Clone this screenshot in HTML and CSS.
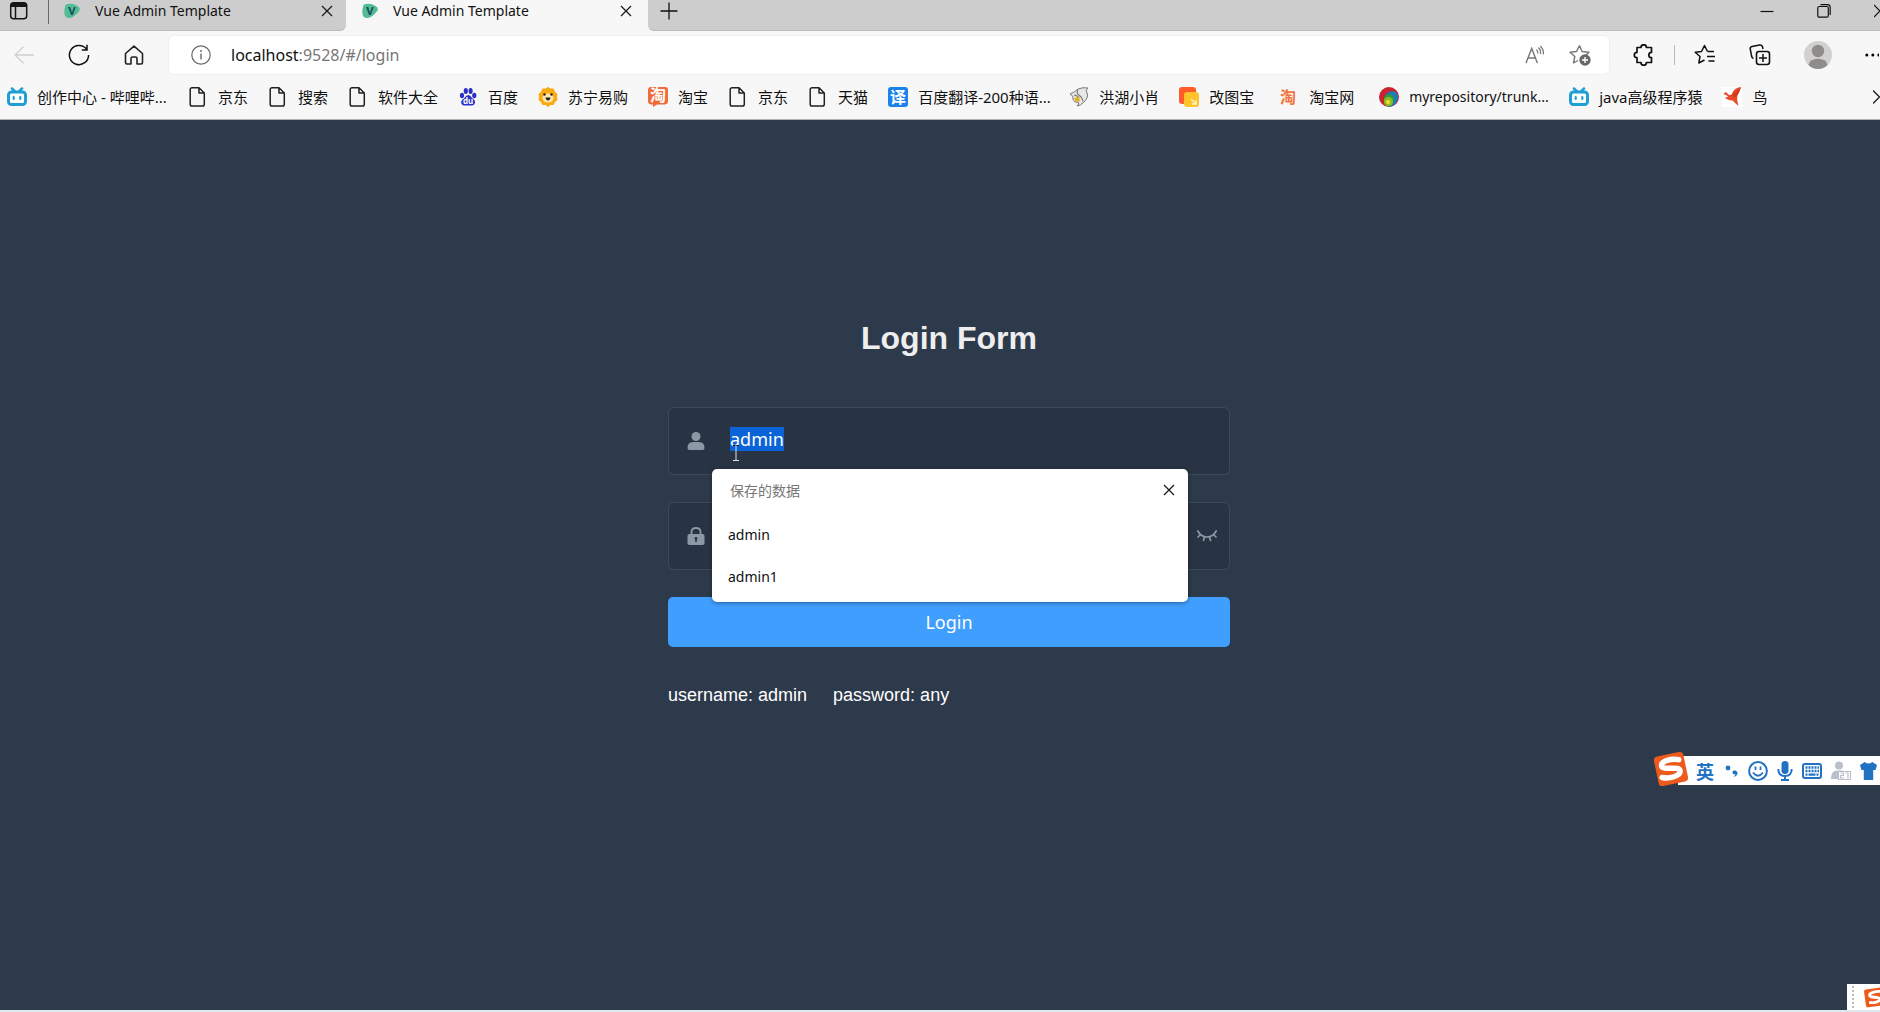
FILE: index.html
```html
<!DOCTYPE html>
<html lang="zh-CN">
<head>
<meta charset="utf-8">
<title>Vue Admin Template</title>
<link rel="stylesheet" href="styles.css">
</head>
<body>
<svg class="sprite" aria-hidden="true">
  <symbol id="file" viewBox="0 0 20 20"><path d="M4 .8H11L16.300 6V17.200A1.800 1.800 0 0 1 14.500 19H4A1.800 1.800 0 0 1 2.200 17.200V2.600A1.800 1.800 0 0 1 4 .8ZM11 .8V6H16.300" fill="none" stroke="#222" stroke-width="1.500" stroke-linejoin="round"/></symbol>
  <symbol id="bili" viewBox="0 0 20 20"><rect x="1.500" y="5" width="17" height="12.500" rx="3" fill="#fff" stroke="#1f9fd4" stroke-width="3"/><path d="M5 1.500L8 4.500M15 1.500L12 4.500" stroke="#1f9fd4" stroke-width="2.500" stroke-linecap="round"/><path d="M6.700 10V12M13.300 10V12" stroke="#1f9fd4" stroke-width="2.200" stroke-linecap="round"/></symbol>
  <symbol id="vue" viewBox="0 0 16 16"><path d="M1 4Q1 1 4 1Q9 0 13.500 3Q18 6 14 9.500Q9 15 5 15Q1 15 .5 11Q0 7 1 4Z" fill="#52bd94"/><path d="M4 4L7 12H8.800L11.800 4H9.800L8 9.500L6.200 4Z" fill="#1f5260"/></symbol>
  <symbol id="x" viewBox="0 0 12 12"><path d="M1 1L11 11M11 1L1 11" fill="none" stroke="#1b1b1b" stroke-width="1.300"/></symbol>
  <symbol id="sogou" viewBox="0 0 36 36"><g transform="rotate(-12 18 18)"><rect x="3" y="3" width="30" height="30" rx="4" fill="#ee5a1c"/><path d="M27.500 10.500C21 7.500 9.500 8 9.500 13C9.500 18.500 27 16 26.500 21.500C26 27 14 27.500 7.500 24.500" fill="none" stroke="#fff" stroke-width="5.500" stroke-linecap="round"/></g></symbol>
</svg>

<header class="browser">
  <div class="tabstrip">
    <button class="workspace" aria-label="Tab actions"><svg width="20" height="20" viewBox="0 0 20 20"><rect x="1.700" y="1.700" width="16" height="16" rx="3" fill="none" stroke="#151515" stroke-width="1.500"/><path d="M1.700 6V4.500Q1.700 1.700 4.500 1.700H15Q17.700 1.700 17.700 4.500V6Z" fill="#151515"/><path d="M6.500 6V18" stroke="#151515" stroke-width="1.500"/></svg></button>
    <div class="tab">
      <svg width="16" height="16"><use href="#vue"/></svg><span>Vue Admin Template</span>
      <button aria-label="Close tab"><svg width="12" height="12"><use href="#x"/></svg></button>
    </div>
    <div class="tab active">
      <svg width="16" height="16"><use href="#vue"/></svg><span>Vue Admin Template</span>
      <button aria-label="Close tab"><svg width="12" height="12"><use href="#x"/></svg></button>
    </div>
    <div class="strip-rest">
      <button aria-label="New tab"><svg width="18" height="18" viewBox="0 0 18 18"><path d="M9 .5V17.500M.5 9H17.500" stroke="#111" stroke-width="1.300"/></svg></button>
      <div class="window-buttons">
        <button aria-label="Minimize"><svg width="14" height="14" viewBox="0 0 14 14"><path d="M.5 7.500H13.500" stroke="#111" stroke-width="1.200"/></svg></button>
        <button aria-label="Restore"><svg width="14" height="14" viewBox="0 0 14 14"><rect x=".8" y="2.500" width="10.500" height="10.700" rx="1.500" fill="none" stroke="#111" stroke-width="1.200"/><path d="M3.500 .7H10.500Q13.200 .7 13.200 3.500V11" fill="none" stroke="#111" stroke-width="1.200"/></svg></button>
        <button aria-label="Close"><svg width="6" height="14" viewBox="0 0 6 14"><path d="M0 1L6 7L0 13" fill="none" stroke="#111" stroke-width="1.200"/></svg></button>
      </div>
    </div>
  </div>

  <div class="toolbar">
    <nav class="nav-buttons">
      <button aria-label="Back"><svg width="20" height="18" viewBox="0 0 20 18"><path d="M9.500 .8L1 9L9.500 17.200M1 9H20" fill="none" stroke="#d0d0d0" stroke-width="1.400"/></svg></button>
      <button aria-label="Refresh"><svg width="22" height="22" viewBox="0 0 22 22"><path d="M18.500 5A9.600 9.600 0 1 0 20.600 11M19 .8V6H13.800" fill="none" stroke="#111" stroke-width="1.500"/></svg></button>
      <button aria-label="Home"><svg width="20" height="20" viewBox="0 0 20 20"><path d="M1.500 8.500L10 1.200L18.500 8.500V17.500Q18.500 19 17 19H13V13.500Q13 12 11.500 12H8.500Q7 12 7 13.500V19H3Q1.500 19 1.500 17.500Z" fill="none" stroke="#222" stroke-width="1.600" stroke-linejoin="round"/></svg></button>
    </nav>
    <div class="omnibox">
      <svg width="20" height="20" viewBox="0 0 20 20"><circle cx="10" cy="10" r="9.200" fill="none" stroke="#6a6a6a" stroke-width="1.200"/><path d="M10 8.500V14.500" stroke="#6a6a6a" stroke-width="1.400"/><circle cx="10" cy="6" r="1" fill="#6a6a6a"/></svg>
      <div class="url">localhost<span>:9528/#/login</span></div>
      <button aria-label="Read aloud"><svg width="20" height="20" viewBox="0 0 20 20"><path d="M1 18L6.700 3.500L12.400 18M3 13H10.500" fill="none" stroke="#777" stroke-width="1.400"/><path d="M11.500 4.500Q13 6 12.800 8.500M13.500 2.500Q16 5 15.500 9M15.300 1Q19 4.500 18.300 9.500" fill="none" stroke="#777" stroke-width="1.200"/></svg></button>
      <button aria-label="Add to favorites"><svg width="22" height="22" viewBox="0 0 22 22"><path d="M10.500 1.500L13 7.500L20 8.200L16.500 11.500M9 16.500L4.500 19L5.800 12.500L1 8.200L7.500 7.500L10.500 1.500" fill="none" stroke="#777" stroke-width="1.400" stroke-linejoin="round"/><circle cx="16" cy="16" r="5.700" fill="#686868"/><path d="M16 13V19M13 16H19" stroke="#fff" stroke-width="1.400"/></svg></button>
    </div>
    <div class="tools">
      <button aria-label="Extensions"><svg width="22" height="22" viewBox="0 0 22 22"><path d="M4 3.500H8A2.700 2.700 0 0 1 13.400 3.500H18.500V8.300A2.700 2.700 0 0 0 18.500 13.700V18.500H13.400A2.700 2.700 0 0 1 8 18.500H4V13.700A2.700 2.700 0 0 1 4 8.300Z" fill="none" stroke="#111" stroke-width="1.700" stroke-linejoin="round"/></svg></button>
      <i class="divider"></i>
      <button aria-label="Favorites"><svg width="22" height="22" viewBox="0 0 22 22"><path d="M13.500 7.500L10.500 1.500L7.500 7.500L1.200 8.300L6 12.500L4.800 19L10.500 16M13.500 7.500H20M13 12.500H21M14.500 17H20.500" fill="none" stroke="#111" stroke-width="1.500" stroke-linejoin="round"/></svg></button>
      <button aria-label="Collections"><svg width="22" height="22" viewBox="0 0 22 22"><rect x="7.500" y="7.500" width="13" height="13" rx="2.500" fill="none" stroke="#111" stroke-width="1.600"/><path d="M14 10V18M10 14H18" stroke="#111" stroke-width="1.500"/><path d="M4.500 14.500Q3 14 2.700 12.500L1.200 5Q1 3 3 2.500L10.500 1Q13 .8 13.500 2.800L14 5" fill="none" stroke="#111" stroke-width="1.500"/></svg></button>
      <button aria-label="Profile"><svg width="28" height="28" viewBox="0 0 28 28"><circle cx="14" cy="14" r="14" fill="#d2d1d0"/><circle cx="14" cy="10" r="6.200" fill="#8f8d8c"/><path d="M4.500 24Q6 17.800 14 17.800Q22 17.800 23.500 24Q19.500 28 14 28Q8.500 28 4.500 24Z" fill="#8f8d8c"/></svg></button>
      <button aria-label="Menu"><svg width="14" height="4" viewBox="0 0 14 4"><circle cx="1.800" cy="2" r="1.500"/><circle cx="7.800" cy="2" r="1.500"/><circle cx="13.800" cy="2" r="1.500"/></svg></button>
    </div>
  </div>

  <nav class="bookmarks">
    <a href="#"><svg><use href="#bili"/></svg><span class="long">创作中心 - 哔哩哔...</span></a>
    <a href="#"><svg><use href="#file"/></svg><span>京东</span></a>
    <a href="#"><svg><use href="#file"/></svg><span>搜索</span></a>
    <a href="#"><svg><use href="#file"/></svg><span>软件大全</span></a>
    <a href="#"><svg viewBox="0 0 20 20"><g fill="#2b30c8"><ellipse cx="4" cy="8.500" rx="2.100" ry="2.800"/><ellipse cx="7.800" cy="4" rx="2.100" ry="2.900"/><ellipse cx="12.600" cy="4" rx="2.100" ry="2.900"/><ellipse cx="16.300" cy="8.500" rx="2.100" ry="2.800"/><path d="M10.200 8Q12.500 8 14 11Q17.500 13 17 16Q16 19 13 18.500H7Q4 19 3.200 16Q3 13 6 11.500Q8 8 10.200 8Z"/></g><text x="5" y="17" class="du">du</text></svg><span>百度</span></a>
    <a href="#"><svg viewBox="0 0 20 20"><path d="M10 .5L12.500 2L15.500 2L16.500 5L19 7L18.500 10L19 13L16.500 15L15.500 17.500L12.500 17.500L10 19.500L7.500 17.500L4.500 17.500L3.500 15L1 13L1.500 10L1 7L3.500 5L4.500 2L7.500 2Z" fill="#f9ab10" stroke="#f9ab10" stroke-linejoin="round"/><ellipse cx="10" cy="11" rx="5.500" ry="4.500" fill="#ffe7ae"/><circle cx="6.500" cy="7.500" r="1.200" fill="#222"/><circle cx="13.500" cy="7.500" r="1.200" fill="#222"/><path d="M7.500 10.500H12.500Q12 13.500 10 13.500Q8 13.500 7.500 10.500Z" fill="#26221d"/></svg><span>苏宁易购</span></a>
    <a href="#"><svg viewBox="0 0 20 20"><path d="M3 0H17Q20 0 20 3V14Q20 17 17 17.500H9L5 20V17.500H3Q0 17 0 14V3Q0 0 3 0Z" fill="#f06a3a"/><text x="2" y="14" class="glyph">淘</text></svg><span>淘宝</span></a>
    <a href="#"><svg><use href="#file"/></svg><span>京东</span></a>
    <a href="#"><svg><use href="#file"/></svg><span>天猫</span></a>
    <a href="#"><svg viewBox="0 0 20 20"><rect width="20" height="20" rx="3" fill="#1a82ea"/><text x="2" y="16" class="glyph">译</text></svg><span class="long">百度翻译-200种语...</span></a>
    <a href="#"><svg viewBox="0 0 20 20"><path d="M1 7Q6 5 9 2Q14 0 19 1Q16 3 18 6Q20 10 15 15Q11 19 8 19Q11 17 9 15Q5 16 4 12Q5 9 1 7Z" fill="#e7e7e7" stroke="#777"/><path d="M9 3Q7 6 10 8T14 14M5 8Q8 8 10 11" fill="none" stroke="#777" stroke-width="1.200"/><path d="M5 11L10 9.500L11 14L7 15Z" fill="#e1b122"/></svg><span>洪湖小肖</span></a>
    <a href="#"><svg viewBox="0 0 20 20"><rect width="17" height="17" rx="3" fill="#ff5b2b"/><rect x="5" y="5" width="15" height="15" rx="3" fill="#ffc42c"/><path d="M12 12L17 17M17 13V17H13" fill="none" stroke="#fff3c8" stroke-width="1.400"/></svg><span class="mid">改图宝</span></a>
    <a href="#"><svg viewBox="0 0 20 20"><text x="1" y="16" class="glyph orange">淘</text></svg><span class="mid">淘宝网</span></a>
    <a href="#"><svg viewBox="0 0 20 20"><circle cx="10" cy="10" r="10" fill="#c9232f"/><path d="M10 20A8 8 0 1 1 17 5Q22 12 15 18Q12 20 10 20Z" fill="#187fba"/><path d="M9 19.500Q3 17 5.500 10Q8 6 13 8Q18 13 11 19.500Z" fill="#2d9b36"/><circle cx="9.500" cy="14.500" r="4.500" fill="#8bbd24"/><circle cx="9" cy="15" r="2" fill="#f2df30"/></svg><span class="repo">myrepository/trunk...</span></a>
    <a href="#"><svg><use href="#bili"/></svg><span>java高级程序猿</span></a>
    <a href="#"><svg viewBox="0 0 20 20"><rect width="20" height="20" fill="#fff"/><path d="M1 7L4 5L7 8L10 7.500Q11 1 19 0Q17 5 15.500 8.500Q14.500 12 16.500 19Q13 16 10.500 13.500Q5 13 3 10.500L6 10Q5 7.500 1 7Z" fill="#e94b29"/><path d="M10 7.500Q14 5 19 0Q17 8 12 11Z" fill="#d23a1c"/></svg><span>鸟</span></a>
    <button aria-label="More favorites"><svg viewBox="0 0 7 14"><path d="M0 .5L6.500 7L0 13.500" fill="none" stroke="#222" stroke-width="1.400"/></svg></button>
  </nav>
</header>

<main>
  <form class="login-form">
    <h1>Login Form</h1>
    <div class="field">
      <label for="username" aria-label="Username"><svg width="18" height="18" viewBox="0 0 18 18"><circle cx="9" cy="4.500" r="4.500" fill="#8a99a5"/><path d="M.5 16Q.5 10 6 10H12Q17.500 10 17.500 16Q17.500 18 15.500 18H2.500Q.5 18 .5 16Z" fill="#8a99a5"/></svg></label>
      <input id="username" type="text" value="admin" autocomplete="off">
      <svg class="ibeam" width="8" height="18" viewBox="0 0 8 18"><path d="M1 1.500H3.500M4.500 1.500H7" stroke="#111"/><path d="M4 2V17M1 16.500H7" stroke="#e4e4e4" fill="none"/></svg>
      <section class="suggestions">
        <div class="suggestions-head"><span>保存的数据</span><button type="button" aria-label="Dismiss"><svg width="12" height="12"><use href="#x"/></svg></button></div>
        <button type="button">admin</button>
        <button type="button">admin1</button>
      </section>
    </div>
    <div class="field">
      <label for="password" aria-label="Password"><svg width="18" height="18" viewBox="0 0 18 18"><path d="M4.500 8V5Q4.500 1 9 1Q13.500 1 13.500 5V8" fill="none" stroke="#8a99a5" stroke-width="1.800"/><path d="M2.500 7H15.500Q17.500 7 17.500 9V16Q17.500 18 15.500 18H2.500Q.5 18 .5 16V9Q.5 7 2.500 7Z" fill="#8a99a5"/><path d="M9 10.500V15" stroke="#283443" stroke-width="1.600"/><circle cx="9" cy="11.500" r="1.400" fill="#283443"/></svg></label>
      <input id="password" type="password">
      <button type="button" class="eye" aria-label="Show password"><svg width="20" height="12" viewBox="0 0 20 12"><path d="M.8 1Q4 7 10 7T19.200 1M3.500 4.500L1 7M7.500 7L6.500 10.500M12.500 7L13.500 10.500M16.500 4.500L19 7" fill="none" stroke="#8a99a5" stroke-width="1.700" stroke-linecap="round"/></svg></button>
    </div>
    <button type="submit" class="submit">Login</button>
    <p class="tips"><span>username: admin</span><span>password: any</span></p>
  </form>
</main>

<aside class="ime">
  <svg class="ime-logo" width="36" height="36"><use href="#sogou"/></svg>
  <span class="lang">英</span>
  <svg width="14" height="20" viewBox="0 0 14 20"><circle cx="3" cy="7" r="2.400" fill="#2272c3"/><path d="M11 10A2 2 0 1 0 10.500 13Q10 15 8.500 16Q13 15 12.500 11Z" fill="#2272c3"/></svg>
  <svg width="20" height="20" viewBox="0 0 20 20"><circle cx="10" cy="10" r="8.900" fill="none" stroke="#2272c3" stroke-width="2"/><path d="M7.500 5.500V9M12.500 5.500V9M5 11.500Q10 18 15 11.500" fill="none" stroke="#2272c3" stroke-width="1.800"/></svg>
  <svg width="16" height="20" viewBox="0 0 16 20"><rect x="4.500" y="0" width="7" height="13" rx="3.500" fill="#2272c3"/><path d="M1.300 8Q1.300 15 8 15T14.700 8M8 15V19M4 19H12" fill="none" stroke="#2272c3" stroke-width="1.900"/></svg>
  <svg width="20" height="16" viewBox="0 0 20 16"><rect x="1" y="1" width="18" height="14" rx="2" fill="none" stroke="#2272c3" stroke-width="2"/><path d="M3.500 4.500H17M3.500 8H17" stroke="#2272c3" stroke-width="2.400" stroke-dasharray="2 1"/><path d="M3.500 11.700H5.500M6.500 11.700H13.500M14.500 11.700H16.500" stroke="#2272c3" stroke-width="2.200"/></svg>
  <svg width="20" height="20" viewBox="0 0 20 20"><circle cx="8" cy="4.500" r="4" fill="#b9bfcb"/><path d="M0 18Q0 9.500 6 9.500H12V18Z" fill="#b9bfcb"/><rect x="7.500" y="10.500" width="12" height="8" fill="#fff" stroke="#b9bfcb"/><path d="M9.500 12H12.500V14.500H9.500V17H13M15 12H17V17.500" fill="none" stroke="#b9bfcb" stroke-width="1.200"/></svg>
  <svg width="17" height="18" viewBox="0 0 18 18" preserveAspectRatio="none"><path d="M5 0Q9 3 13 0L18 3L16.500 8H14V18H4V8H1.500L0 3Z" fill="#2272c3"/></svg>
</aside>
<aside class="tray">
  <i></i>
  <svg width="18" height="22" viewBox="0 0 25 30"><g transform="rotate(-8 18 15)"><rect x="4" y="3" width="27" height="25" rx="3" fill="#ee5a1c"/><path d="M27 8.500C20 7 10.500 8 11 12C11.500 16 24 14.500 24 18.500C24 23 15 23 9 21.500" fill="none" stroke="#fff" stroke-width="4"/></g></svg>
</aside>
<script>
  const username = document.getElementById('username');
  username.focus();
  username.select();
</script>
</body>
</html>
```
FILE: styles.css
```css
* { box-sizing: border-box; }
body {
  margin: 0;
  min-height: 100vh;
  display: flex;
  flex-direction: column;
  overflow: hidden;
  background: #2d3a4b;
  border-bottom: 2px solid #dfe8ee;
  font-family: "Noto Sans", "Noto Sans CJK SC", sans-serif;
}
button {
  display: flex;
  align-items: center;
  justify-content: center;
  padding: 0;
  border: 0;
  background: none;
  font: inherit;
  color: inherit;
}
svg { display: block; flex: none; }
.sprite { position: absolute; width: 0; height: 0; }

/* browser frame */
.browser { background: #f7f7f7; border-bottom: 1px solid #b4b4b4; color: #111; }
.tabstrip { display: flex; height: 31px; background: #f7f7f7; }
.workspace { width: 48px; padding-right: 10px; }
.workspace, .tab, .strip-rest { height: 31px; padding-bottom: 9px; background: #cdcdcd; border-bottom: 1px solid #bbb; }
.tab {
  display: flex;
  align-items: center;
  width: 298px;
  padding-left: 16px;
  padding-right: 13px;
  border-radius: 0 0 6px 0;
  font-size: 14px;
  line-height: 20px;
  background: linear-gradient(#666, #666) 0 0 / 1px 24px no-repeat #cdcdcd;
}
.tab span { flex: 1; margin-left: 15px; }
.tab.active { width: 302px; padding-left: 16px; padding-right: 16px; background: #f7f7f7; border-color: #f7f7f7; }
.strip-rest { flex: 1; display: flex; align-items: center; justify-content: space-between; padding-left: 12px; border-radius: 0 0 0 6px; }
.window-buttons { display: flex; gap: 43px; }

.toolbar { display: flex; align-items: center; height: 48px; }
.nav-buttons { display: flex; gap: 34px; width: 169px; padding-left: 14px; align-items: center; }
.omnibox {
  flex: 1;
  display: flex;
  align-items: center;
  height: 38px;
  padding: 0 18px 0 22px;
  background: #fff;
  border-radius: 5px;
  box-shadow: 0 0 2px #ddd;
}
.url { flex: 1; margin-left: 20px; font-size: 16px; line-height: 24px; }
.url span { color: #777; }
.omnibox button + button { margin-left: 24px; }
.tools { display: flex; align-items: center; gap: 33px; padding: 0 1px 0 24px; }
.tools .divider { width: 1px; height: 20px; margin: 0 -14px; background: #bbb; }

.bookmarks { display: flex; align-items: center; gap: 20px; height: 40px; padding: 0 0 4px 7px; font-size: 15px; line-height: 24px; white-space: nowrap; }
.bookmarks a { display: flex; align-items: center; gap: 10px; color: #111; text-decoration: none; }
.bookmarks svg { width: 20px; height: 20px; overflow: visible; }
.bookmarks .long { width: 131px; }
.bookmarks .mid { width: 50px; }
.bookmarks .repo { width: 140px; font-size: 14px; }
.bookmarks button { margin-left: auto; }
.bookmarks button svg { width: 7px; height: 14px; overflow: hidden; }
.du { font: bold 8px "Noto Sans", sans-serif; fill: #fff; }
.glyph { font: bold 16px "Noto Sans CJK SC", sans-serif; fill: #fff; }
.orange { fill: #f4733d; }

/* login page */
main { flex: 1; display: flex; justify-content: center; align-items: flex-start; padding: 198px 0 0 18px; }
.login-form { display: flex; flex-direction: column; gap: 27px; width: 562px; color: #fff; }
h1 { margin: 0 0 22px; font: bold 32px/40px "Liberation Sans", sans-serif; text-align: center; color: #eee; }
.field {
  position: relative;
  display: flex;
  height: 68px;
  background: rgba(0, 0, 0, .1);
  border: 1px solid rgba(255, 255, 255, .1);
  border-radius: 6px;
}
.field label { display: flex; align-items: center; width: 46px; padding-left: 18px; }
.field input {
  flex: 1;
  height: 62px;
  min-width: 0;
  padding: 0 15px;
  border: 0;
  outline: 0;
  background: none;
  font: 18px "Noto Sans", sans-serif;
  color: #fff;
}
.field input::selection { background: #0a64d8; color: #fff; }
.eye { width: 44px; }
.ibeam { position: absolute; left: 63px; top: 36px; z-index: 2; }
.suggestions {
  position: absolute;
  left: 43px;
  right: 41px;
  top: 61px;
  z-index: 1;
  padding-bottom: 5px;
  background: #fff;
  border-radius: 5px;
  box-shadow: 0 1px 4px rgba(0, 0, 0, .4);
  color: #111;
  font-size: 14px;
}
.suggestions > button { width: 100%; height: 42px; padding-left: 16px; justify-content: flex-start; }
.suggestions-head { display: flex; align-items: center; justify-content: space-between; height: 42px; margin-bottom: 2px; padding: 0 13px 0 18px; color: #767676; }
.submit { height: 50px; border-radius: 5px; background: #409eff; font-size: 18px; }
.tips { display: flex; gap: 26px; margin: 9px 0 0; font: 18px/24px "Liberation Sans", sans-serif; }

/* floating input-method bars */
.ime {
  position: absolute;
  right: 0;
  top: 756px;
  display: flex;
  align-items: center;
  gap: 9px;
  height: 29px;
  padding: 0 3px 0 18px;
  background: #fff;
}
.ime-logo { position: absolute; left: -25px; top: -5px; }
.lang { margin-right: 2px; font: bold 18px/28px "Noto Sans CJK SC", sans-serif; color: #2272c3; }
.tray { position: absolute; right: 0; bottom: 2px; display: flex; align-items: center; justify-content: space-between; width: 33px; height: 26px; padding-left: 5px; background: #fff; }
.tray i { height: 22px; border-left: 2px dotted #bbb; }
```
